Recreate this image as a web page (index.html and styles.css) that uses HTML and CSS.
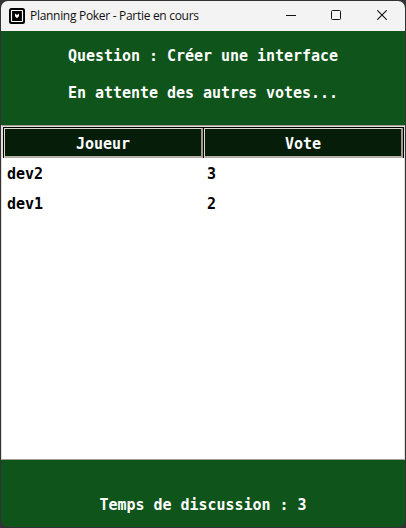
FILE: index.html
```html
<!DOCTYPE html>
<html lang="fr">
<head>
<meta charset="utf-8">
<title>Planning Poker - Partie en cours</title>
<link rel="stylesheet" href="styles.css">
</head>
<body>
<main class="window">
  <header class="titlebar">
    <svg class="logo" width="16" height="16" viewBox="0 0 16 16"><rect width="16" height="16" rx="2.5" fill="#000"/><rect x="2.5" y="2.5" width="11" height="11" rx=".5" fill="#000" stroke="#fff" stroke-width="1.2"/><path d="M6 5.5v2.8L8 10.3l2-2V5.5L8 7z" fill="#fff"/></svg>
    <h1 class="title">Planning Poker - Partie en cours</h1>
    <div class="controls">
      <svg width="10" height="10" viewBox="0 0 10 10"><path d="M0 5.5h10" stroke="#111"/></svg>
      <svg width="10" height="10" viewBox="0 0 10 10"><rect x=".5" y=".5" width="9" height="9" rx="1" fill="none" stroke="#111"/></svg>
      <svg class="close" width="10" height="10" viewBox="0 0 10 10"><path d="M.3.3l9.4 9.4M9.7.3L.3 9.7" stroke="#111" stroke-width="1.1"/></svg>
    </div>
  </header>
  <section class="question">
    <p>Question : Créer une interface</p>
    <p>En attente des autres votes...</p>
  </section>
  <section class="votes">
    <div class="head"><div class="th">Joueur</div><div class="th">Vote</div></div>
    <div class="row"><span>dev2</span><span>3</span></div>
    <div class="row"><span>dev1</span><span>2</span></div>
  </section>
  <footer class="timer">Temps de discussion : 3</footer>
</main>
</body>
</html>
```
FILE: styles.css
```css
* { box-sizing: border-box; }
body { margin: 0; background: #333236; }
.window {
  width: 404px; height: 526px; margin: 1px; overflow: hidden;
  display: flex; flex-direction: column;
  border-radius: 7px; background: #0f541a; color: #fff;
  font: bold 15px/20px "DejaVu Sans Mono", monospace; letter-spacing: -0.03px;
}
.titlebar {
  height: 30px; flex: none; display: flex; align-items: center;
  padding: 0 18px 0 8px; background: #f3f3f3; color: #111;
}
.logo { margin-top: -1px; }
.title { margin: 0 0 0 5px; font: 12px/16px "Open Sans", sans-serif; letter-spacing: -0.3px; white-space: nowrap; }
.controls { margin-left: auto; display: flex; gap: 35px; margin-top: -2px; }
.close { margin-left: 1px; }
.question { height: 94px; flex: none; padding-top: 15px; text-align: center; }
.question p { margin: 0 0 17px; }
.votes {
  height: 335px; flex: none; background: #fff; color: #000;
  border: 1px solid #e3ded5; border-top-color: #a09c94; border-bottom-color: #a09c94;
}
.head {
  display: grid; grid-template-columns: 200px 200px; height: 32px;
  border-top: 1px solid #e3ded5; border-left: 1px solid #e3ded5;
  background: #000; padding: 1px 0 0;
}
.th {
  height: 30px; margin-left: 1px;
  border: 1px solid #ddd8cc; border-width: 1px 2px 2px 1px;
  border-right-color: #a09a90; border-bottom-color: #b5b0a5;
  background: #061d0a; color: #fff; text-align: center; line-height: 30px;
}
.row { display: grid; grid-template-columns: 200px 1fr; height: 30px; padding-left: 5px; line-height: 33px; }
.timer { text-align: center; padding-top: 35px; }
```
